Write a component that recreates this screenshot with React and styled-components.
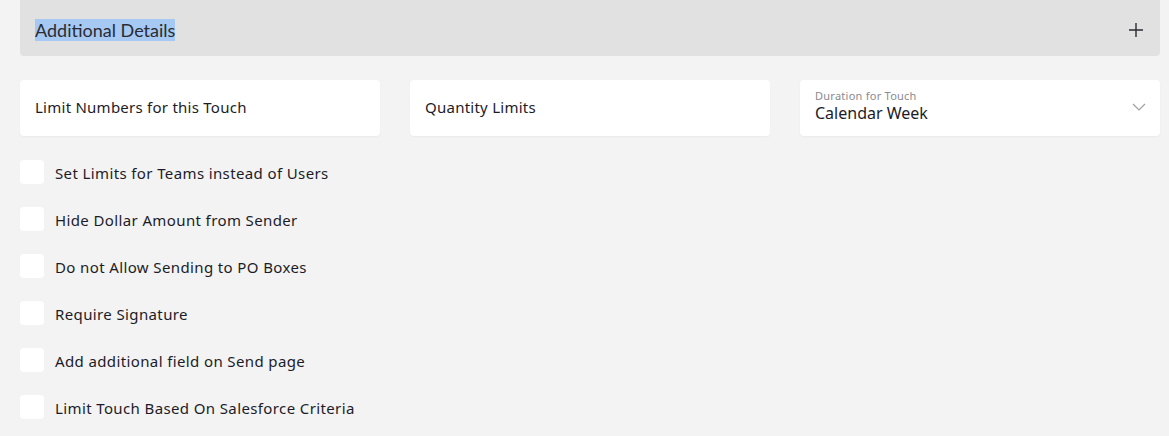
import React from 'react';
import styled, { createGlobalStyle } from 'styled-components';

const GlobalStyle = createGlobalStyle`
    body {
        margin: 0;
        background: #f3f3f3;
        font-family: "Noto Sans", Lato, sans-serif;
        color: #1c1c28;
    }
`;

const Page = styled.div`
    padding: 0 9px 0 20px;
    display: flex;
    flex-direction: column;
`;

const Header = styled.div`
    height: 56px;
    background: #e1e1e1;
    border-radius: 0 0 4px 4px;
    display: flex;
    align-items: center;
    justify-content: space-between;
    padding: 3px 16px 0 15px;
    box-sizing: border-box;
    h3 {
        margin: 0;
        font-family: Lato, sans-serif;
        font-size: 18px;
        font-weight: 400;
        color: #2b2b33;
        span {
            background: #a5c9f2;
        }
    }
`;

const Fields = styled.div`
    display: grid;
    grid-template-columns: repeat(3, 360px);
    gap: 30px;
    margin-top: 24px;
`;

const Field = styled.div`
    height: 56px;
    background: #fff;
    border-radius: 4px;
    box-shadow: 0 1px 2px rgba(0, 0, 0, 0.04);
    display: flex;
    align-items: center;
    justify-content: space-between;
    padding: 0 14px 2px 15px;
    box-sizing: border-box;
    font-size: 15px;
    letter-spacing: 0.25px;
`;

const SelectValue = styled.div`
    display: flex;
    flex-direction: column;
    margin-top: -3px;
    small {
        font-size: 11px;
        color: #8a8a90;
        line-height: 14px;
    }
    span {
        font-size: 16px;
        line-height: 20px;
        letter-spacing: 0;
    }
`;

const Options = styled.div`
    display: flex;
    flex-direction: column;
    gap: 23px;
    margin-top: 24px;
`;

const Option = styled.label`
    display: flex;
    align-items: center;
    gap: 11px;
    font-size: 15px;
    letter-spacing: 0.38px;
    height: 24px;
    span {
        padding-top: 2px;
    }
`;

const Box = styled.i`
    width: 24px;
    height: 24px;
    background: #fff;
    border-radius: 4px;
    flex-shrink: 0;
`;

const options = [
    'Set Limits for Teams instead of Users',
    'Hide Dollar Amount from Sender',
    'Do not Allow Sending to PO Boxes',
    'Require Signature',
    'Add additional field on Send page',
    'Limit Touch Based On Salesforce Criteria',
];

export default function App() {
    return (
        <Page>
            <GlobalStyle />
            <Header>
                <h3><span>Additional Details</span></h3>
                <svg width="16" height="16" viewBox="0 0 16 16">
                    <path d="M8 1v14M1 8h14" stroke="#2b2b33" strokeWidth="1.4" />
                </svg>
            </Header>
            <Fields>
                <Field>Limit Numbers for this Touch</Field>
                <Field>Quantity Limits</Field>
                <Field>
                    <SelectValue>
                        <small>Duration for Touch</small>
                        <span>Calendar Week</span>
                    </SelectValue>
                    <svg width="14" height="8" viewBox="0 0 14 8">
                        <path d="M1 1l6 6 6-6" fill="none" stroke="#a0a0a6" strokeWidth="1.2" />
                    </svg>
                </Field>
            </Fields>
            <Options>
                {options.map(o => (
                    <Option key={o}><Box /><span>{o}</span></Option>
                ))}
            </Options>
        </Page>
    );
}
